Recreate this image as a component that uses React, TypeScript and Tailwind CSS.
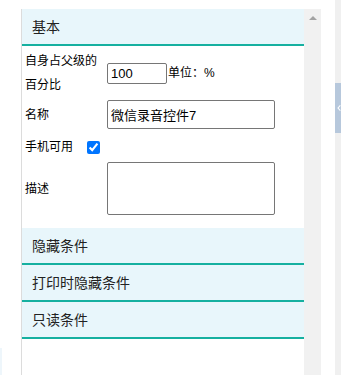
import React from "react";

const font = { fontFamily: '"Liberation Sans", "Noto Sans CJK SC", sans-serif' };

function Header({ title }: { title: string }) {
  return (
    <div className="h-[37px] bg-[#e8f6fb] border-b-2 border-[#16b0a0] pl-[10px] flex items-center text-[14px] text-[#222] leading-none">
      {title}
    </div>
  );
}

export default function App() {
  return (
    <div className="w-[341px] h-[375px] bg-white flex overflow-hidden text-black" style={font}>
      <div className="w-[21px] flex flex-col justify-end">
        <div className="w-[2px] h-[27px] bg-[#eef6fb]" />
      </div>
      <div className="mt-[9px] w-[283px] border-l border-[#dcdcdc] flex flex-col">
        <Header title="基本" />
        <div className="pl-[3px] pb-[13px] text-[12px]">
          <div className="flex items-center mt-[3px]">
            <div className="w-[82px] leading-[24px]">
              自身占父级的
              <br />
              百分比
            </div>
            <input
              defaultValue="100"
              className="w-[60px] h-[21px] border border-[#767676] rounded-[2px] px-[3px] text-[13px] outline-none"
              style={font}
            />
            <span className="ml-px">单位：%</span>
          </div>
          <div className="flex items-center mt-[3px]">
            <div className="w-[82px]">名称</div>
            <input
              defaultValue="微信录音控件7"
              className="w-[168px] h-[29px] border border-[#767676] rounded-[2px] px-[3px] text-[13px] outline-none"
              style={font}
            />
          </div>
          <div className="flex items-center mt-[6px] h-[24px]">
            <div className="w-[62px]">手机可用</div>
            <input type="checkbox" defaultChecked className="m-0 w-[13px] h-[13px]" />
          </div>
          <div className="flex items-center mt-[3px]">
            <div className="w-[82px]">描述</div>
            <textarea className="w-[168px] h-[53px] border border-[#767676] rounded-[2px] resize-none outline-none" />
          </div>
        </div>
        <Header title="隐藏条件" />
        <Header title="打印时隐藏条件" />
        <Header title="只读条件" />
      </div>
      <div className="mt-[9px] w-[17px] bg-[#f1f1f1] flex flex-col items-center">
        <div className="mt-[7px] w-0 h-0 border-x-[4px] border-x-transparent border-b-[4px] border-b-[#a3a3a3]" />
      </div>
      <div className="w-[14px]" />
      <div className="w-[6px] bg-[#f0f0f0] flex flex-col">
        <div className="mt-[83px] h-[50px] bg-[#b7c8dc] flex items-center">
          <svg width="6" height="10" viewBox="0 0 6 10" className="ml-[2px]">
            <path d="M5 1 L1.5 5 L5 9" stroke="white" strokeWidth="1.6" fill="none" />
          </svg>
        </div>
      </div>
    </div>
  );
}
